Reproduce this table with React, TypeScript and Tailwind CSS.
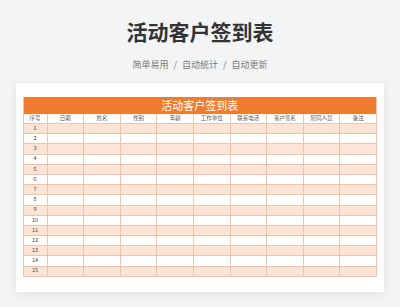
import React from "react";

const headers = ["序号", "日期", "姓名", "性别", "年龄", "工作单位", "联系电话", "客户签名", "陪同人员", "备注"];

export default function App() {
  const rows = Array.from({ length: 15 }, (_, i) => i + 1);
  return (
    <div
      className="w-[400px] h-[307px] bg-[#f3f4f6] overflow-hidden flex flex-col items-center"
      style={{ fontFamily: '"Noto Sans CJK SC", "Noto Sans", sans-serif' }}
    >
      <div className="mt-[17px] h-[28px] flex items-center text-[21px] leading-none font-bold text-[#333333]">
        活动客户签到表
      </div>
      <div className="mt-[12px] h-[14px] flex items-center gap-[5px] text-[9px] leading-none text-[#7a7a7a]">
        <span>简单易用</span>
        <span>/</span>
        <span>自动统计</span>
        <span>/</span>
        <span>自动更新</span>
      </div>
      <div className="mt-[12px] w-[368px] h-[209px] bg-white shadow-[0_2px_8px_rgba(0,0,0,0.08)] pt-[14px] pl-[6.5px]">
        <div className="w-[354.5px] border-l border-r border-[#f3c3a6]">
          <div className="h-[17px] bg-[#ed7d31] flex items-center justify-center text-white text-[11px] leading-none">
            活动客户签到表
          </div>
          <div className="grid grid-cols-[23px_repeat(9,1fr)] h-[10px] bg-white border-b border-[#f3c3a6]">
            {headers.map((h, i) => (
              <div
                key={h}
                className={`flex items-center justify-center text-[5.5px] leading-none text-[#555] ${i > 0 ? "border-l border-[#f3c3a6]" : ""}`}
              >
                {h}
              </div>
            ))}
          </div>
          {rows.map((r) => (
            <div
              key={r}
              className={`grid grid-cols-[23px_repeat(9,1fr)] h-[10.2px] border-b border-[#f3c3a6] ${r % 2 === 1 ? "bg-[#fce4d6]" : "bg-white"}`}
            >
              {headers.map((h, i) => (
                <div
                  key={h}
                  className={`flex items-center justify-center text-[5.5px] leading-none text-[#444] ${i > 0 ? "border-l border-[#f3c3a6]" : ""}`}
                >
                  {i === 0 ? r : ""}
                </div>
              ))}
            </div>
          ))}
        </div>
      </div>
    </div>
  );
}
